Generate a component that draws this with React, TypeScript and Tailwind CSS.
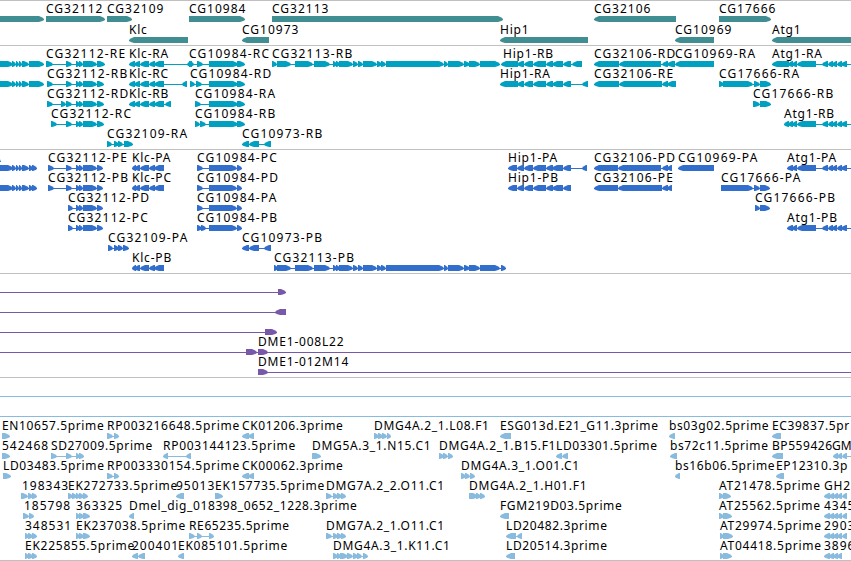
type Span = [number, number];

type Feature = {
  name?: string;
  x?: number; // label position, defaults to the first exon
  rev?: boolean;
  exons: Span[];
  line?: Span; // intron line, defaults to the full extent
};

const f = (name: string, exons: Span[], extra: Partial<Feature> = {}): Feature => ({ name, exons, ...extra });
const r = (name: string, exons: Span[], extra: Partial<Feature> = {}): Feature => ({ name, exons, rev: true, ...extra });

// Exon groups shared between isoforms
const LEFT: Span[] = [[-8, 13], [12, 16], [16, 19], [19, 22], [22, 29]];
const CG32112: Span[] = [[76, 80], [79, 83], [83, 97]];
const KLC: Span[] = [[134, 140], [140, 149], [149, 155], [154, 164]];
const CG32113: Span[] = [
  [277, 291], [295, 313], [314, 330], [333, 337], [336, 340], [339, 353], [353, 358], [358, 363], [363, 377],
  [377, 382], [381, 386], [386, 444], [444, 448], [448, 464], [464, 470], [469, 480], [480, 500],
];
const HIP1: Span[] = [[517, 524], [524, 533], [533, 546], [546, 553], [552, 563], [563, 571]];
const ATG1: Span[] = [[797, 816], [822, 828], [828, 833], [832, 837], [837, 842], [841, 847]];
const EST: Span[] = [[824, 830], [829, 834], [833, 838], [837, 842], [842, 847]];

const GENES: Feature[][] = [
  [
    f("", [[-8, 44]]),
    f("CG32112", [[46, 105]]),
    f("CG32109", [[107, 132]]),
    f("CG10984", [[189, 245]]),
    f("CG32113", [[272, 503]]),
    r("CG32106", [[594, 676]]),
    f("CG17666", [[719, 771]]),
  ],
  [
    r("Klc", [[129, 188]]),
    r("CG10973", [[242, 269]]),
    r("Hip1", [[500, 588]]),
    r("CG10969", [[675, 714]]),
    r("Atg1", [[772, 870]]),
  ],
];

const TRANSCRIPTS: Feature[][] = [
  [
    f("", [...LEFT, [29, 44]]),
    f("CG32112-RE", [[46, 53], [66, 72], ...CG32112, [97, 105]]),
    r("Klc-RA", [[129, 135], ...KLC, [187, 192]]),
    f("CG10984-RC", [[189, 194], [197, 203], [209, 238], [237, 245]]),
    f("CG32113-RB", [[272, 277], ...CG32113]),
    r("Hip1-RB", [[501, 518], ...HIP1, [572, 582]], { x: 503 }),
    r("CG32106-RD", [[594, 619], [619, 661], [662, 668], [667, 675]]),
    r("CG10969-RA", [[675, 714]]),
    r("Atg1-RA", [[772, 789], [788, 793], [792, 797], ...ATG1], { line: [772, 860] }),
  ],
  [
    f("", [...LEFT, [29, 44]]),
    f("CG32112-RB", [[47, 53], [66, 72], ...CG32112, [97, 104]]),
    r("Klc-RC", [[129, 135], ...KLC, [182, 187]]),
    f("CG10984-RD", [[190, 195], [196, 202], [209, 238], [237, 245]]),
    r("Hip1-RA", [[500, 518], ...HIP1, [582, 588]]),
    r("CG32106-RE", [[594, 619], [619, 662], [662, 668], [667, 676]]),
    f("CG17666-RA", [[719, 724], [723, 753], [754, 760], [760, 771]]),
  ],
  [
    f("CG32112-RD", [[47, 53], [61, 66], [66, 72], ...CG32112, [97, 104]]),
    r("Klc-RB", [[129, 135], ...KLC, [165, 171]]),
    f("CG10984-RA", [[195, 201], [209, 238], [237, 245]]),
    f("CG17666-RB", [[753, 760], [760, 771]]),
  ],
  [
    f("CG32112-RC", [[51, 57], [66, 72], ...CG32112, [97, 104]]),
    f("CG10984-RB", [[195, 200], [200, 206], [209, 238], [237, 245]]),
    r("Atg1-RB", [[784, 789], [788, 793], [792, 797], ...ATG1], { line: [784, 860] }),
  ],
  [
    f("CG32109-RA", [[107, 112], [114, 119], [118, 123], [124, 133]]),
    r("CG10973-RB", [[242, 249], [249, 259], [264, 271]]),
  ],
];

const PROTEINS: Feature[][] = [
  [
    f("A", [...LEFT, [29, 33], [32, 37]], { x: -7 }),
    f("CG32112-PE", [[48, 54], [66, 72], ...CG32112, [97, 103]]),
    r("Klc-PA", [[132, 136], ...KLC]),
    f("CG10984-PC", [[197, 203], [209, 237], [237, 242]]),
    r("Hip1-PA", [[508, 517], ...HIP1, [582, 587]]),
    r("CG32106-PD", [[594, 618], [618, 661], [662, 668], [667, 672]]),
    r("CG10969-PA", [[678, 714]]),
    r("Atg1-PA", [[787, 793], [792, 797], ...ATG1], { line: [787, 860] }),
  ],
  [
    f("", [...LEFT, [29, 33], [32, 37]]),
    f("CG32112-PB", [[48, 54], [66, 72], ...CG32112, [97, 103]]),
    r("Klc-PC", [[132, 136], ...KLC]),
    f("CG10984-PD", [[197, 203], [209, 237], [237, 242]]),
    r("Hip1-PB", [[508, 517], ...HIP1]),
    r("CG32106-PE", [[594, 618], [618, 662], [662, 668], [667, 672]]),
    f("CG17666-PA", [[721, 753], [754, 760], [760, 770]]),
  ],
  [
    f("CG32112-PD", [[68, 73], ...CG32112, [97, 103]]),
    f("CG10984-PA", [[197, 203], [209, 237], [237, 242]]),
    f("CG17666-PB", [[755, 760], [760, 770]]),
  ],
  [
    f("CG32112-PC", [[68, 73], ...CG32112, [97, 103]]),
    f("CG10984-PB", [[197, 202], [201, 206], [209, 237], [237, 242]]),
    r("Atg1-PB", [[787, 793], [792, 797], ...ATG1], { line: [787, 860] }),
  ],
  [
    f("CG32109-PA", [[108, 113], [114, 119], [118, 123], [123, 129]]),
    r("CG10973-PB", [[242, 249], [249, 259], [264, 271]]),
  ],
  [
    r("Klc-PB", [[132, 136], ...KLC]),
    f("CG32113-PB", [[274, 278], ...CG32113, [501, 506]]),
  ],
];

const BACS: Feature[][] = [
  [f("", [[278, 286]], { line: [-5, 286] })],
  [r("", [[275, 286]], { line: [-5, 286] })],
  [f("", [[265, 277]], { line: [-5, 276] })],
  [f("DME1-008L22", [[246, 257], [258, 268]], { x: 258, line: [-5, 860] })],
  [f("DME1-012M14", [[258, 268]], { line: [258, 860] })],
];

const ESTS: Feature[][] = [
  [f("", [], { line: [-5, 860] })],
  [f("", [], { line: [-5, 860] })],
  [
    f("EN10657.5prime", [[2, 10]]),
    f("RP003216648.5prime", [[107, 113], [114, 119]]),
    r("CK01206.3prime", [[242, 249], [248, 254]]),
    f("DMG4A.2_1.L08.F1", [[374, 379], [378, 383], [382, 387], [387, 391]]),
    r("ESG013d.E21_G11.3prime", [[500, 511]]),
    r("bs03g02.5prime", [[669, 675]]),
    r("EC39837.5pr", [[772, 781]]),
  ],
  [
    f("542468", [[2, 10]]),
    f("SD27009.5prime", [[51, 57], [66, 72], [76, 80], [79, 84]]),
    r("RP003144123.5prime", [[163, 168], [186, 191]]),
    f("DMG5A.3_1.N15.C1", [[312, 321]]),
    f("DMG4A.2_1.B15.F1", [[439, 444], [443, 448], [448, 453]]),
    r("LD03301.5prime", [[556, 562], [562, 568]]),
    r("bs72c11.5prime", [[670, 677]]),
    r("BP559426", [[772, 783]]),
    r("GM", [[833, 838], [837, 842], [842, 847]], { x: 832, line: [833, 860] }),
  ],
  [
    f("LD03483.5prime", [[3, 11]]),
    f("RP003330154.5prime", [[107, 113], [114, 119]]),
    r("CK00062.3prime", [[242, 249], [248, 254]]),
    f("DMG4A.3_1.O01.C1", [[461, 466], [465, 470], [470, 475]]),
    r("bs16b06.5prime", [[675, 680]]),
    r("EP12310.3p", [[776, 784]]),
  ],
  [
    f("198343", [[21, 28], [28, 33], [32, 37]], { x: 22 }),
    f("EK272733.5prime", [[68, 73], [72, 77], [76, 80], [79, 84], [83, 88]]),
    r("95013", [[176, 184]]),
    f("EK157735.5prime", [[215, 223]]),
    f("DMG7A.2_2.O11.C1", [[326, 332], [333, 338], [337, 342], [341, 346]]),
    f("DMG4A.2_1.H01.F1", [[469, 478], [476, 481], [480, 485]]),
    f("AT21478.5prime", [[719, 724], [723, 731]]),
    r("GH2", EST),
  ],
  [
    f("185798", [[23, 29], [29, 34]], { x: 24 }),
    f("363325", [[76, 80], [79, 84], [83, 90]]),
    r("Dmel_dig_018398_0652_1228.3prime", [[129, 134]]),
    r("FGM219D03.5prime", [[500, 509]]),
    f("AT25562.5prime", [[719, 724], [723, 732]]),
    r("4345", EST),
  ],
  [
    f("348531", [[25, 29], [28, 33], [32, 37]]),
    f("EK237038.5prime", [[76, 80], [79, 84], [83, 90]]),
    f("RE65235.5prime", [[189, 195], [197, 202], [209, 214]]),
    f("DMG7A.2_1.O11.C1", [[326, 332], [333, 338], [337, 342], [341, 346]]),
    r("LD20482.3prime", [[506, 516], [517, 522]]),
    f("AT29974.5prime", [[720, 724], [723, 733]]),
    r("2903", EST),
  ],
  [
    f("EK225855.5prime", [[25, 29], [28, 33], [32, 37]]),
    r("200401", [[132, 138], [138, 145]]),
    r("EK085101.5prime", [[178, 184]]),
    f("DMG4A.3_1.K11.C1", [[333, 338], [337, 341], [340, 348], [347, 353], [353, 358], [357, 362], [363, 368]]),
    r("LD20514.3prime", [[506, 515]]),
    f("AT04418.5prime", [[720, 724], [723, 732]]),
    r("3896", EST.slice(0, 4)),
  ],
];

// Box with a blunt tip, pointing along the strand
const arrow = ([a, b]: Span, rev?: boolean) => {
  const t = Math.min((b - a) * 0.8, 5);
  const m = t * 0.35;
  return rev
    ? `${b},0 ${a + t},0 ${a + m},1.6 ${a},3 ${a},4 ${a + m},5 ${a + t},6 ${b},6`
    : `${a},0 ${b - t},0 ${b - m},1.6 ${b},3 ${b},4 ${b - m},5 ${b - t},6 ${a},6`;
};

const tracking = (name: string) => {
  if (/^CG\d+-/.test(name)) return "tracking-[1.2px]";
  if (/^(CG)?\d+$/.test(name)) return "tracking-[1px]";
  if (/^(AT|EK)/.test(name)) return "tracking-[0.75px]";
  if (/^BP/.test(name)) return "tracking-[0.55px]";
  if (/^GM/.test(name)) return "tracking-[0px]";
  if (/^RP/.test(name)) return "tracking-[0.72px]";
  if (/\.\dp/.test(name)) return "tracking-[0.62px]";
  if (/^DMG/.test(name)) return "tracking-[0.68px]";
  return "tracking-[0.8px]";
};

function Row({ features, tall }: { features: Feature[]; tall?: boolean }) {
  return (
    <div className={`relative ${tall ? "h-[21px]" : "h-5"}`}>
      {features.map((ft, i) =>
        ft.name ? (
          <span
            key={i}
            className={`absolute top-0 leading-4 text-black whitespace-pre ${tracking(ft.name)}`}
            style={{ left: ft.x ?? ft.exons[0][0] }}
          >
            {ft.name}
          </span>
        ) : null
      )}
      <svg className="absolute left-0 top-[15px] fill-current" width="851" height="6">
        {features.map((ft, i) => {
          const [a, b] = ft.line ?? [ft.exons[0][0], ft.exons[ft.exons.length - 1][1]];
          return (
            <g key={i}>
              <rect x={a} y="3" width={b - a} height="1" />
              {ft.exons.map((e, j) => (
                <polygon key={j} points={arrow(e, ft.rev)} />
              ))}
            </g>
          );
        })}
      </svg>
    </div>
  );
}

function Track({ rows, className, tall }: { rows: Feature[][]; className: string; tall?: boolean }) {
  return (
    <section className={`border-t border-[#c0c0c0] ${className}`}>
      {rows.map((features, i) => (
        <Row key={i} features={features} tall={tall} />
      ))}
    </section>
  );
}

export default function App() {
  return (
    <div className="w-[851px] h-[561px] overflow-hidden bg-white border-b border-[#c0c0c0] text-[12px] font-['Noto_Sans','Open_Sans',sans-serif]">
      <Track rows={GENES} className="text-[#408e92] pb-[2px]" tall />
      <Track rows={TRANSCRIPTS} className="text-[#00a0c0] pb-[3px]" />
      <Track rows={PROTEINS} className="text-[#326ecc] pb-[3px]" />
      <Track rows={BACS} className="text-[#7858a8] pb-[3px]" />
      <Track rows={ESTS} className="text-[#88bbdd] pb-[2px]" />
    </div>
  );
}
